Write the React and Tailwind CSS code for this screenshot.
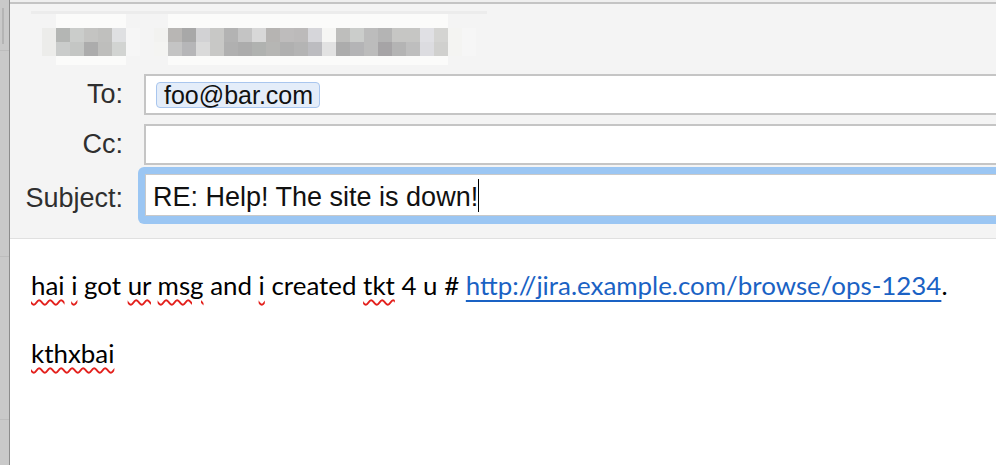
import React from 'react';

// blurred title mosaic: [row1, row2] colours per 14px cell, starting at x=28
const MOSAIC = [
  ['#f4f4f4', '#f4f4f4'],
  ['#ececea', '#ececea'],
  ['#b4b6b4', '#cacccb'],
  ['#cbcdcb', '#c4c6c4'],
  ['#c4c4c2', '#acacac'],
  ['#c0c0be', '#bebebc'],
  ['#dfe0e2', '#d2d4d2'],
  ['#f6f6f6', '#f6f6f6'],
  ['#f4f4f4', '#f4f4f4'],
  ['#f2f2f0', '#f4f4f2'],
  ['#b8b6b4', '#c4c4c4'],
  ['#a8a8a8', '#b6b6b8'],
  ['#d2d2d4', '#dadada'],
  ['#c8c8c6', '#c8c8c6'],
  ['#b3b3b3', '#b0b0b0'],
  ['#c4c4c4', '#acacac'],
  ['#d8d8d8', '#b0b2b0'],
  ['#b6b4b2', '#b6b6b4'],
  ['#bebcbc', '#b0b0b0'],
  ['#bcbaba', '#b4b4b4'],
  ['#d6d6da', '#bcbcc0'],
  ['#f6f6f4', '#e2e2e2'],
  ['#bebebc', '#acacac'],
  ['#cbcdcb', '#b4b4b6'],
  ['#bcbcbc', '#bcbcbc'],
  ['#b4b4b4', '#a6a4a6'],
  ['#c6c6c4', '#b4b4b4'],
  ['#c6c6c4', '#bebebe'],
  ['#e0e0e4', '#dcdce0'],
  ['#d4d4d2', '#d0d0ce'],
  ['#f4f4f2', '#f4f4f2'],
  ['#f6f6f6', '#f6f6f6'],
  ['#f4f4f4', '#f4f4f4'],
];

const lightCell = (i) =>
  (i >= 2 && i <= 6) || (i >= 10 && i <= 29) ? '#fbfbfa' : '#f4f4f4';

const Typo = ({ children }) => (
  <span className="underline decoration-wavy decoration-[#e3201c] decoration-[1.5px] underline-offset-[4px]">
    {children}
  </span>
);

const Label = ({ children, className = '' }) => (
  <div className={`w-[113px] shrink-0 text-right text-[27px] text-[#2f2f2f] leading-none ${className}`}>
    {children}
  </div>
);

export default function App() {
  return (
    <div className="w-[996px] h-[465px] flex overflow-hidden bg-white font-['Liberation_Sans',Arial,sans-serif]">
      {/* left window edge */}
      <div className="w-[10px] shrink-0 bg-[#c9c9c9] border-r border-[#8c8c8c] flex flex-col">
        <div className="mt-[8px] ml-[2px] w-[2px] h-[36px] bg-[#b4b4b4]" />
        <div className="mt-[6px] h-px bg-[#bdbdbd]" />
        <div className="mt-[205px] h-px bg-[#bdbdbd]" />
        <div className="mt-[162px] h-px bg-[#bdbdbd]" />
      </div>

      <div className="flex-1 flex flex-col min-w-0">
        <div className="h-[2px] bg-[#efefef]" />
        <div className="h-[2px] bg-[#c4c4c4]" />

        {/* header */}
        <div className="bg-[#f4f4f4] border-b border-[#e0e0e0] pb-[14px]">
          {/* blurred sender line */}
          <div className="mt-[7px] ml-[21px] w-[456px] h-[3px] bg-[#ececec]" />
          <div className="ml-[18px] flex">
            {MOSAIC.map(([a, b], i) => (
              <div key={i} className="w-[14px] flex flex-col">
                <div className="h-[14px]" style={{ backgroundColor: lightCell(i) }} />
                <div className="h-[14px]" style={{ backgroundColor: a }} />
                <div className="h-[14px]" style={{ backgroundColor: b }} />
                <div className="h-[9px]" style={{ backgroundColor: lightCell(i) }} />
              </div>
            ))}
          </div>

          {/* To */}
          <div className="mt-[9px] flex items-center">
            <Label>To:</Label>
            <div className="ml-[21px] mr-[-20px] flex-1 h-[41px] border-2 border-[#c5c5c5] bg-white flex items-start">
              <div className="ml-[10px] mt-[6px] h-[26px] pl-[7px] pr-[6px] rounded-[4px] border border-[#a9c6ee] bg-[#e4edf9] flex items-center text-[25px] leading-none text-[#111]">
                foo@bar.com
              </div>
            </div>
          </div>

          {/* Cc */}
          <div className="mt-[9px] flex items-center">
            <Label>Cc:</Label>
            <div className="ml-[21px] mr-[-20px] flex-1 h-[41px] border-2 border-[#c5c5c5] bg-white" />
          </div>

          {/* Subject */}
          <div className="mt-[2px] flex items-center">
            <Label className="pt-[5px]">Subject:</Label>
            <div className="ml-[15px] mr-[-20px] flex-1 pt-[7px] pb-[8px] px-[7px] rounded-[6px] bg-[#9bc6f3]">
              <div className="h-[42px] border border-[#c9c9c9] bg-white flex items-center pl-[7px] pt-[4px] text-[27px] leading-none text-[#111]">
                RE: Help! The site is down!
                <span className="inline-block w-px h-[33px] -mt-[3px] bg-black" />
              </div>
            </div>
          </div>
        </div>

        {/* body */}
        <div className="flex-1 pl-[21px] pt-[29px] font-['Lato','Noto_Sans',sans-serif] text-[25.9px] leading-[34px] text-black">
          <p>
            <Typo>hai</Typo> <Typo>i</Typo> got <Typo>ur</Typo> <Typo>msg</Typo> and{' '}
            <Typo>i</Typo> created <Typo>tkt</Typo> 4 u #{' '}
            <a
              href="#"
              className="text-[#1a62c4] underline decoration-[#1a62c4] decoration-2 underline-offset-[5px]"
            >
              http://jira.example.com/browse/ops-1234
            </a>
            .
          </p>
          <p className="mt-[34px]">
            <Typo>kthxbai</Typo>
          </p>
        </div>
      </div>
    </div>
  );
}
